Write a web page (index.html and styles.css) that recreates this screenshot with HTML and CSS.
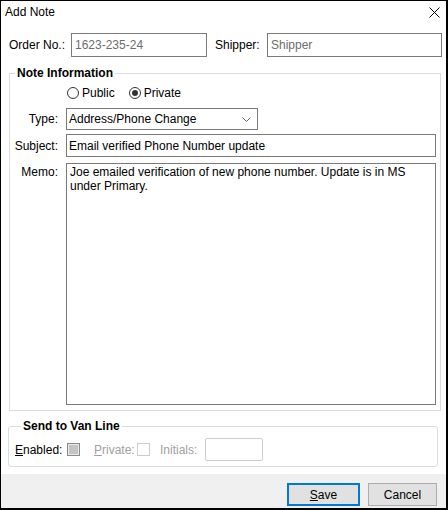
FILE: index.html
```html
<!DOCTYPE html>
<html lang="en">
<head>
  <meta charset="UTF-8" />
  <title>Add Note</title>
  <link rel="stylesheet" href="styles.css">
</head>
<body>

  <div class="window">
    <div class="titlebar">
      <span class="title">Add Note</span>
      <span class="close">
        <svg width="11" height="11" viewBox="0 0 11 11"><path d="M0.5 0.5L10.5 10.5M10.5 0.5L0.5 10.5" stroke="#000" stroke-width="1"/></svg>
      </span>
    </div>

    <div class="content">
      <div class="order-row">
        <span class="order-lbl">Order No.:</span>
        <div class="textbox order-no">1623-235-24</div>
        <span class="shipper-lbl">Shipper:</span>
        <div class="textbox shipper">Shipper</div>
      </div>

      <fieldset class="group note-info">
        <legend>Note Information</legend>

        <div class="form-row radios">
          <span class="radio"></span><span class="radio-text">Public</span>
          <span class="radio checked"></span><span class="radio-text">Private</span>
        </div>

        <div class="form-row type-row">
          <span class="lbl">Type:</span>
          <div class="select">
            <span>Address/Phone Change</span>
            <svg width="9" height="5" viewBox="0 0 9 5"><path d="M0.5 0.5L4.5 4.5L8.5 0.5" fill="none" stroke="#606060" stroke-width="1"/></svg>
          </div>
        </div>

        <div class="form-row subject-row">
          <span class="lbl">Subject:</span>
          <div class="textbox subject">Email verified Phone Number update</div>
        </div>

        <div class="form-row memo-row">
          <span class="lbl memo-lbl">Memo:</span>
          <div class="textbox memo">Joe emailed verification of new phone number. Update is in MS<br>under Primary.</div>
        </div>
      </fieldset>

      <fieldset class="group van-line">
        <legend>Send to Van Line</legend>
        <div class="van-row">
          <span class="van-lbl enabled-lbl"><u>E</u>nabled:</span>
          <span class="check"></span>
          <span class="van-lbl private-lbl disabled"><u>P</u>rivate:</span>
          <span class="check off"></span>
          <span class="van-lbl initials-lbl disabled">Initials:</span>
          <div class="initials"></div>
        </div>
      </fieldset>
    </div>

    <div class="footer">
      <button class="btn save"><u>S</u>ave</button>
      <button class="btn cancel">Cancel</button>
    </div>
  </div>

</body>
</html>
```

FILE: styles.css
```css
* {
  box-sizing: border-box;
}
body {
  margin: 0;
  font-family: "Liberation Sans", Arial, sans-serif;
  font-size: 12px;
  color: #000;
  background: #fff;
}
.window {
  width: 448px;
  height: 510px;
  border: 1px solid #000;
  border-right-width: 2px;
  border-bottom-width: 2px;
  display: flex;
  flex-direction: column;
  background: #fff;
}
.titlebar {
  height: 22px;
  display: flex;
  align-items: center;
  justify-content: space-between;
  padding: 0 6px 0 4px;
  line-height: 14px;
}
.close {
  display: flex;
  margin-top: 1px;
}
.content {
  flex: 1;
  padding: 10px 0 0 8px;
}
.order-row {
  display: flex;
  align-items: center;
  height: 24px;
}
.order-lbl {
  width: 62px;
}
.shipper-lbl {
  width: 52px;
  margin-left: 8px;
}
.textbox {
  border: 1px solid #7a7a7a;
  padding: 0 3px;
  line-height: 14px;
  white-space: nowrap;
}
.order-no,
.shipper {
  height: 24px;
  padding-top: 4px;
  color: #6d6d6d;
}
.order-no {
  width: 136px;
}
.shipper {
  width: 175px;
}

.group {
  margin: 9px 0 0 0;
  padding: 0;
  border: 1px solid #dcdcdc;
  min-width: 0;
}
.group legend {
  font-weight: bold;
  line-height: 14px;
  padding: 0 2px;
  margin-left: 5px;
}
.note-info {
  width: 432px;
  padding: 6px 4px 5px 0;
}
.form-row {
  display: flex;
  align-items: center;
}
.form-row .lbl {
  width: 50px;
  margin-right: 6px;
  flex-shrink: 0;
  text-align: right;
  padding-right: 2px;
  line-height: 14px;
}
.form-row .textbox {
  flex: 1;
}
.radios {
  height: 14px;
  padding-left: 57px;
}
.radio {
  width: 12px;
  height: 12px;
  border: 1px solid #333;
  border-radius: 50%;
  display: flex;
  align-items: center;
  justify-content: center;
}
.radio.checked::after {
  content: "";
  width: 6px;
  height: 6px;
  border-radius: 50%;
  background: #333;
}
.radio-text {
  margin-left: 3px;
  margin-right: 14px;
}
.type-row {
  margin-top: 8px;
}
.select {
  width: 192px;
  height: 22px;
  border: 1px solid #7a7a7a;
  display: flex;
  align-items: center;
  justify-content: space-between;
  padding: 0 6px 0 2px;
  line-height: 14px;
}
.select svg {
  margin-top: 1px;
}
.subject-row {
  margin-top: 4px;
}
.subject {
  height: 23px;
  padding-top: 4px;
  padding-left: 2px;
}
.memo-row {
  margin-top: 6px;
  align-items: flex-start;
}
.memo-lbl {
  padding-top: 2px;
}
.memo {
  height: 242px;
  padding: 1px 3px;
  white-space: normal;
}

.van-line {
  width: 430px;
  margin-left: -1px;
  margin-top: 8px;
  padding: 5px 0 5px 6px;
  border-color: #d8dde2;
  border-radius: 3px;
}
.van-line legend {
  margin-left: 6px;
}
.van-row {
  display: flex;
  align-items: center;
  height: 23px;
}
.van-lbl {
  line-height: 14px;
}
.enabled-lbl {
  width: 52px;
}
.private-lbl {
  width: 43px;
  margin-left: 14px;
}
.initials-lbl {
  width: 45px;
  margin-left: 10px;
}
.disabled {
  color: #a0a0a0;
}
.check {
  width: 13px;
  height: 13px;
  border: 1px solid #8a8a8a;
  background: #c4c4c4;
  box-shadow: inset 0 0 0 1px #eaeaea;
}
.check.off {
  border-color: #cccccc;
  background: #fff;
  box-shadow: none;
}
.initials {
  width: 58px;
  height: 23px;
  border: 1px solid #cdcdcd;
  border-radius: 2px;
}

.footer {
  height: 34px;
  background: #f0f0f0;
  display: flex;
  justify-content: flex-end;
  align-items: flex-start;
  padding: 9px 9px 0 0;
  gap: 8px;
}
.btn {
  font-family: "Liberation Sans", Arial, sans-serif;
  font-size: 12px;
  color: #000;
  height: 23px;
  background: #e1e1e1;
  border: 1px solid #adadad;
  padding: 0;
  line-height: 14px;
}
.save {
  width: 73px;
  border: 2px solid #0078d7;
}
.cancel {
  width: 69px;
}
```
